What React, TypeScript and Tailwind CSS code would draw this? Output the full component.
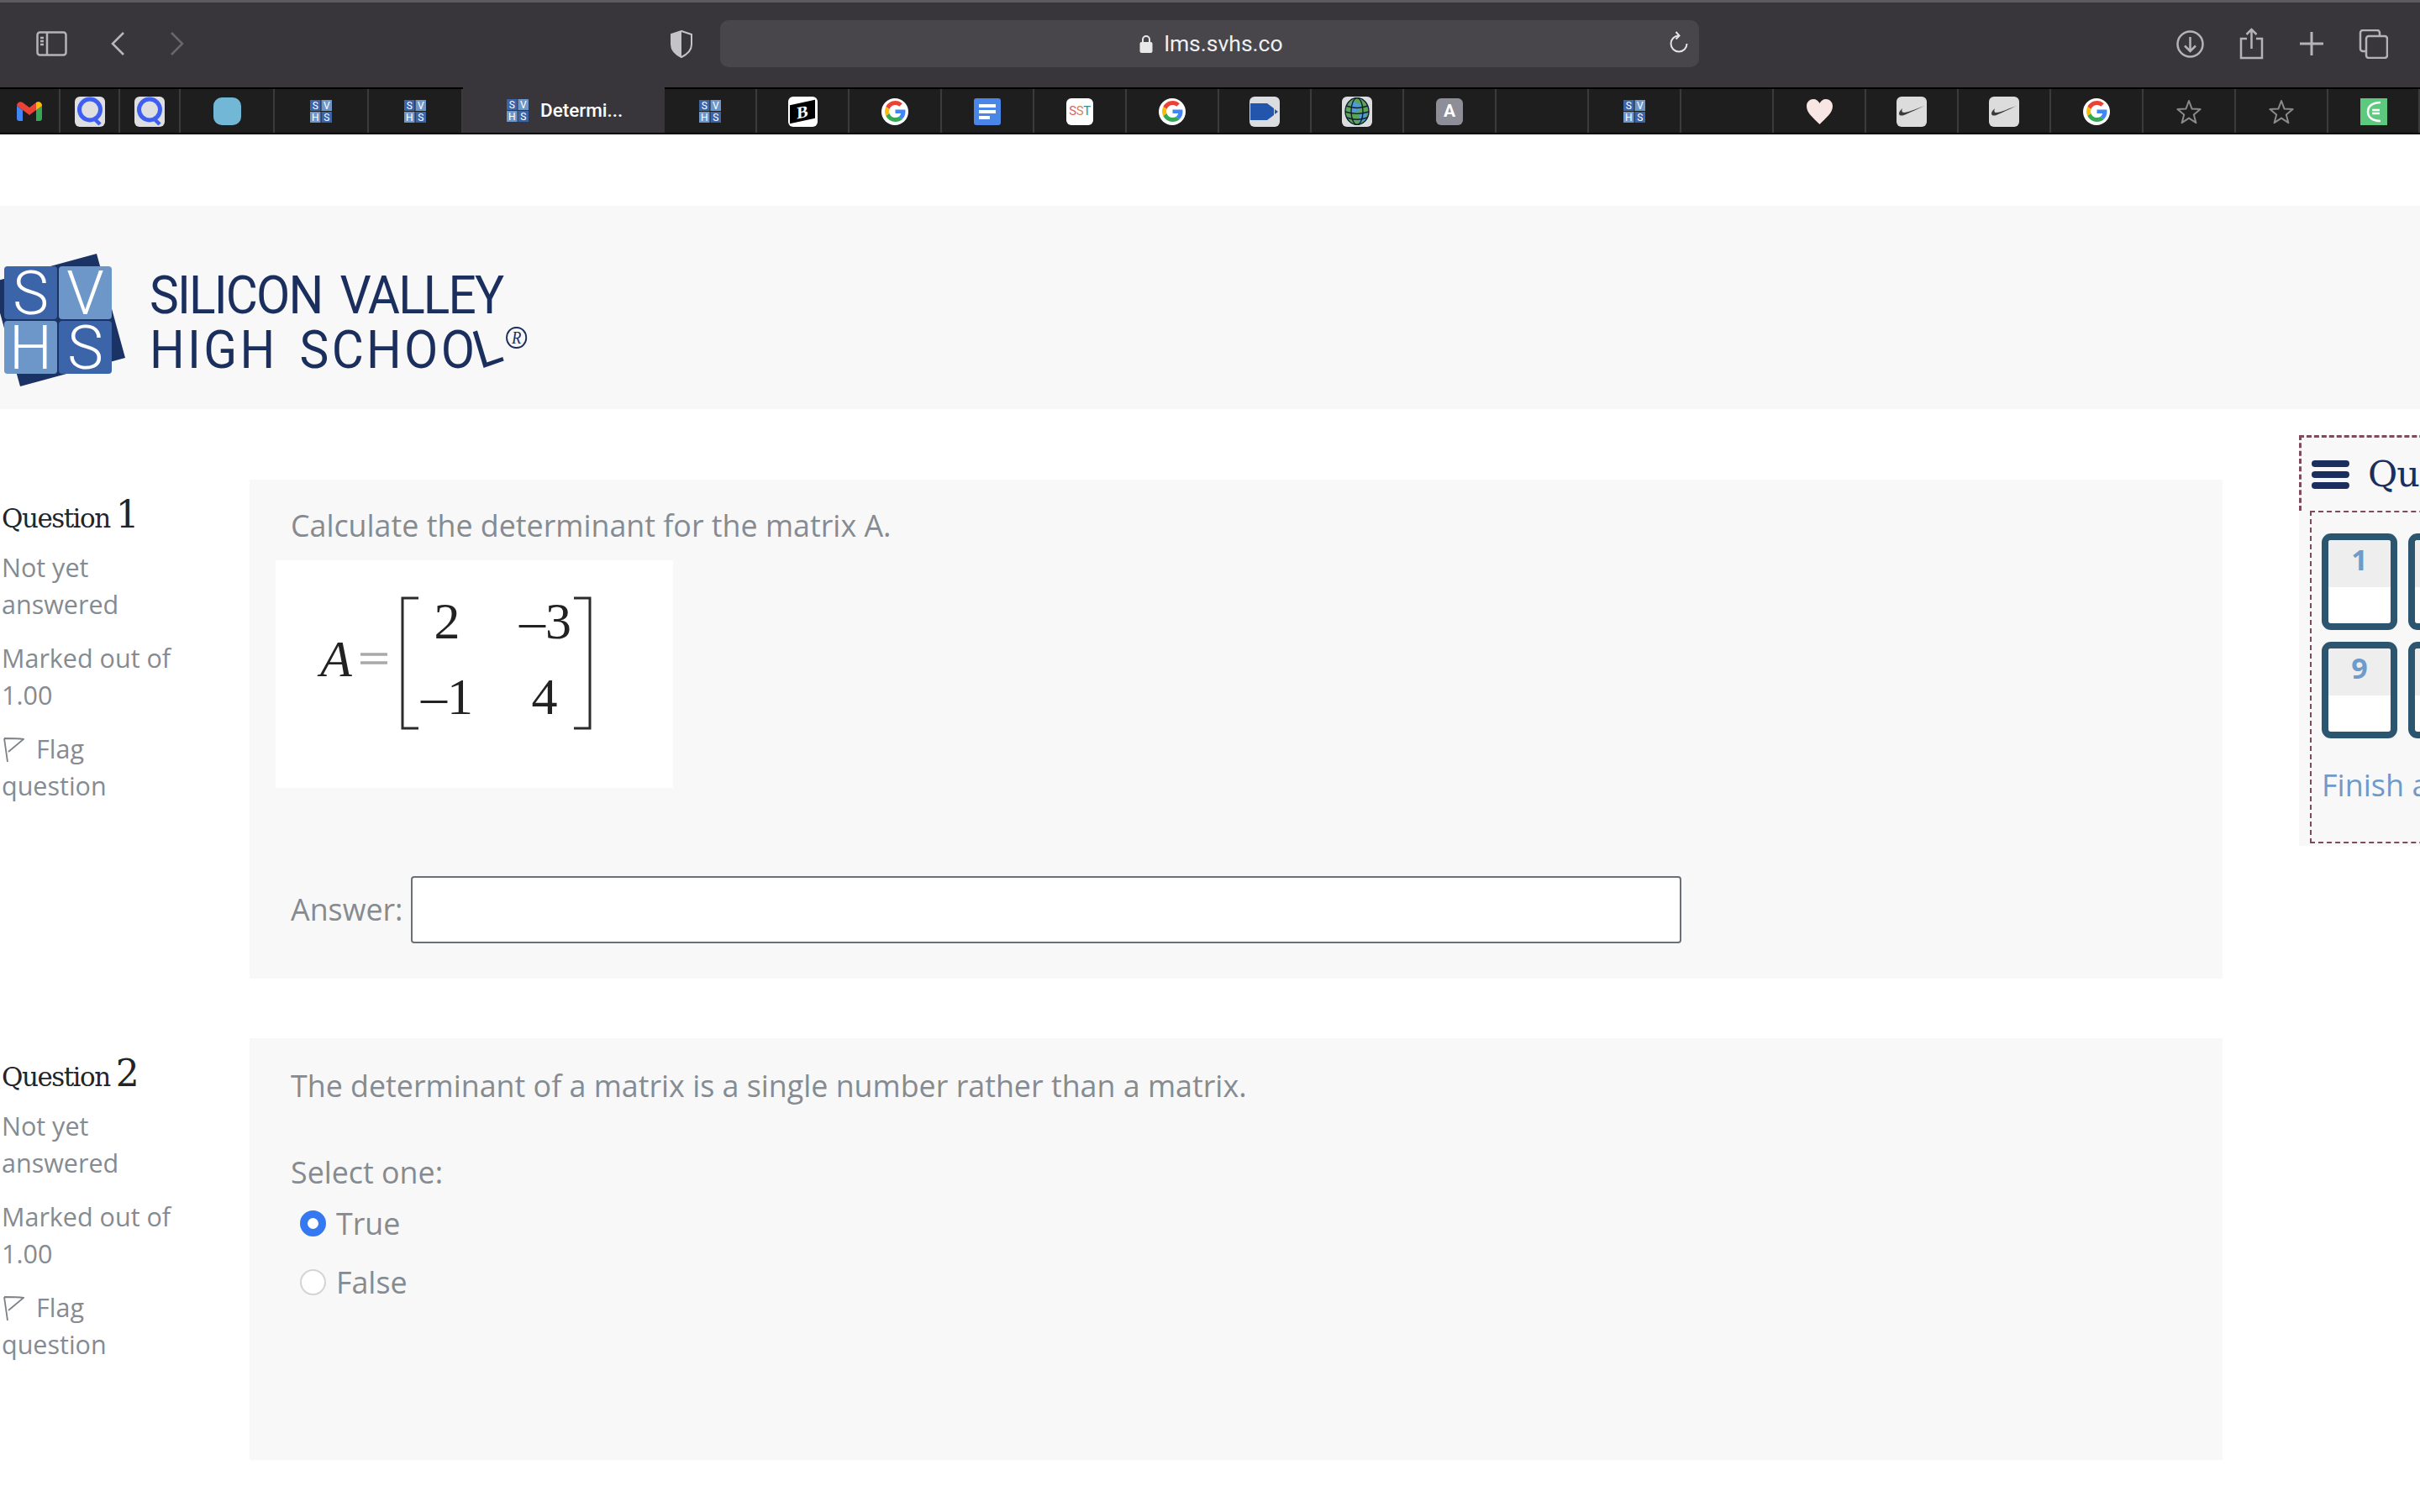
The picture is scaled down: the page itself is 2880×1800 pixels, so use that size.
import React from "react";

const GoogleG = () => (
  <div className="w-[32px] h-[32px] rounded-full bg-white flex items-center justify-center">
    <svg width="25" height="25" viewBox="0 0 48 48">
      <path fill="#EA4335" d="M24 9.5c3.54 0 6.71 1.22 9.21 3.6l6.85-6.85C35.9 2.38 30.47 0 24 0 14.62 0 6.51 5.38 2.56 13.22l7.98 6.19C12.43 13.72 17.74 9.5 24 9.5z" />
      <path fill="#4285F4" d="M46.98 24.55c0-1.57-.15-3.09-.38-4.55H24v9.02h12.94c-.58 2.96-2.26 5.48-4.78 7.18l7.73 6c4.51-4.18 7.09-10.36 7.09-17.65z" />
      <path fill="#FBBC05" d="M10.53 28.59c-.48-1.45-.76-2.99-.76-4.59s.27-3.14.76-4.59l-7.98-6.19C.92 16.46 0 20.12 0 24c0 3.88.92 7.54 2.56 10.78l7.97-6.19z" />
      <path fill="#34A853" d="M24 48c6.48 0 11.93-2.13 16.03-5.81l-7.73-6c-2.15 1.45-4.92 2.3-8.3 2.3-6.26 0-11.57-4.22-13.47-9.91l-7.98 6.19C6.51 42.62 14.62 48 24 48z" />
    </svg>
  </div>
);

const SvhsMini = () => (
  <svg width="26" height="27" viewBox="0 0 26 27">
    <rect x="0" y="0" width="12.5" height="13" fill="#3c64a8" />
    <rect x="13.5" y="0" width="12.5" height="13" fill="#6d97c8" />
    <rect x="0" y="14" width="12.5" height="13" fill="#6d97c8" />
    <rect x="13.5" y="14" width="12.5" height="13" fill="#3c64a8" />
    <g fill="#ffffff" fontFamily="Roboto, sans-serif" fontSize="12" textAnchor="middle">
      <text x="6.2" y="11">S</text>
      <text x="19.7" y="11">V</text>
      <text x="6.2" y="25">H</text>
      <text x="19.7" y="25">S</text>
    </g>
  </svg>
);

const QIcon = () => (
  <div className="w-[36px] h-[36px] rounded-[6px] bg-[#dfdfe2] flex items-center justify-center">
    <svg width="32" height="35" viewBox="0 0 32 35" fill="none">
      <circle cx="16" cy="15.5" r="12.5" stroke="#3f5ff0" strokeWidth="5" />
      <path d="M22 27l6 6" stroke="#3f5ff0" strokeWidth="4.5" />
    </svg>
  </div>
);

const NikeIcon = () => (
  <div className="w-[36px] h-[36px] rounded-[6px] bg-[#dcdcdc] flex items-center justify-center">
    <svg width="32" height="18" viewBox="0 0 32 18">
      <path d="M31 2 C22 6 12 11 7 13 C4 14 1 14 1 11 C1 9 3 7 5 5 C4 8 4 10 7 10 C12 10 22 5 31 2z" fill="#3a3a3a" />
    </svg>
  </div>
);

const StarIcon = () => (
  <svg width="30" height="30" viewBox="0 0 30 30" fill="none" stroke="#8a8a8c" strokeWidth="2" strokeLinejoin="round">
    <path d="M15 2l3.6 9.6 10 .5-7.8 6.4 2.6 9.7L15 22.6l-8.4 5.6 2.6-9.7-7.8-6.4 10-.5z" />
  </svg>
);

type Tab = { w: string; icon?: React.ReactNode; active?: boolean };

const tabs: Tab[] = [
  {
    w: "w-[72px]",
    icon: (
      <svg width="30" height="23" viewBox="0 0 30 23">
        <path d="M0 5v15a3 3 0 0 0 3 3h4V10z" fill="#4285f4" />
        <path d="M23 10v13h4a3 3 0 0 0 3-3V5z" fill="#34a853" />
        <path d="M0 5l7 5 8 6 8-6 7-5c0-4-4-6-7-4l-8 6-8-6C4-1 0 1 0 5z" fill="#ea4335" />
        <path d="M23 1v9l7-5c0-4-4-6-7-4z" fill="#fbbc05" />
      </svg>
    ),
  },
  { w: "w-[71px]", icon: <QIcon /> },
  { w: "w-[72px]", icon: <QIcon /> },
  { w: "w-[112px]", icon: <div className="w-[33px] h-[33px] rounded-[10px] bg-[#72b8d6]" /> },
  { w: "w-[112px]", icon: <SvhsMini /> },
  { w: "w-[112px]", icon: <SvhsMini /> },
  { w: "w-[240px]", active: true },
  { w: "w-[110px]", icon: <SvhsMini /> },
  {
    w: "w-[110px]",
    icon: (
      <div className="w-[35px] h-[36px] rounded-[6px] bg-white flex items-center justify-center">
        <div className="w-[30px] h-[22px] bg-black -skew-y-12 flex items-center justify-center">
          <span className="font-['Liberation_Serif',serif] font-bold text-[20px] leading-none text-white">B</span>
        </div>
      </div>
    ),
  },
  { w: "w-[110px]", icon: <GoogleG /> },
  {
    w: "w-[110px]",
    icon: (
      <div className="w-[32px] h-[32px] rounded-[3px] bg-[#4a86e8] flex flex-col justify-center gap-[3px] pl-[6px]">
        <div className="w-[20px] h-[4px] bg-white" />
        <div className="w-[20px] h-[4px] bg-white" />
        <div className="w-[13px] h-[4px] bg-white" />
      </div>
    ),
  },
  {
    w: "w-[110px]",
    icon: (
      <div className="w-[32px] h-[32px] rounded-[6px] bg-white flex items-center justify-center font-['Roboto',sans-serif] text-[15px] tracking-[-0.5px] leading-none">
        <span className="text-[#d9645f]">S</span>
        <span className="text-[#c98a5a]">S</span>
        <span className="text-[#3f8a8a]">T</span>
      </div>
    ),
  },
  { w: "w-[110px]", icon: <GoogleG /> },
  {
    w: "w-[110px]",
    icon: (
      <div className="w-[36px] h-[36px] rounded-[6px] bg-[#dcdde0] flex items-center pl-[1px]">
        <svg width="34" height="20" viewBox="0 0 34 20">
          <path d="M0 0h20l8 6v8l-8 6H0z" fill="#2255ab" />
          <path d="M29 7l4 3-4 3z" fill="#2255ab" />
        </svg>
      </div>
    ),
  },
  {
    w: "w-[110px]",
    icon: (
      <div className="w-[36px] h-[36px] rounded-[6px] bg-[#dcdde0] flex items-center justify-center">
        <svg width="30" height="33" viewBox="0 0 30 33" fill="none">
          <ellipse cx="15" cy="16.5" rx="14" ry="16" fill="#5ea35a" />
          <path d="M8 5l12 3-2 8-10 2zM18 20l9-3-2 10-8 3z" fill="#4f9bd6" />
          <g stroke="#10202e" strokeWidth="1.4">
            <ellipse cx="15" cy="16.5" rx="14" ry="16" />
            <ellipse cx="15" cy="16.5" rx="7" ry="16" />
            <path d="M2 10c8 3 18 3 26 0M1 17c9 3 19 3 28 0M3 24c8 3 16 3 24 0" />
          </g>
        </svg>
      </div>
    ),
  },
  {
    w: "w-[110px]",
    icon: (
      <div className="w-[32px] h-[32px] rounded-[6px] bg-[#8e8e98] flex items-center justify-center font-['Roboto',sans-serif] font-bold text-[21px] leading-none text-white">
        A
      </div>
    ),
  },
  { w: "w-[110px]" },
  { w: "w-[110px]", icon: <SvhsMini /> },
  { w: "w-[110px]" },
  {
    w: "w-[110px]",
    icon: (
      <svg width="31" height="30" viewBox="0 0 31 30">
        <path d="M15.5 30C9 23 0 17 0 8.500C0 3 4 0 8 0c3.500 0 6 2 7.500 5C17 2 19.500 0 23 0c4 0 8 3 8 8.500C31 17 22 23 15.500 30z" fill="#f8e6e3" />
      </svg>
    ),
  },
  { w: "w-[110px]", icon: <NikeIcon /> },
  { w: "w-[110px]", icon: <NikeIcon /> },
  { w: "w-[110px]", icon: <GoogleG /> },
  { w: "w-[110px]", icon: <StarIcon /> },
  { w: "w-[110px]", icon: <StarIcon /> },
  {
    w: "w-[109px]",
    icon: (
      <div className="w-[32px] h-[32px] bg-[#5dc97e] flex items-center justify-center">
        <svg width="20" height="26" viewBox="0 0 20 26" fill="none" stroke="#ffffff" strokeWidth="2.5">
          <path d="M18 2C9 2 3 6 3 13s6 11 15 11" />
          <path d="M8 11h9M8 15h9" />
        </svg>
      </div>
    ),
  },
];

function Toolbar() {
  return (
    <div className="h-[104px] bg-[#38363a] border-t-[3px] border-[#5c5b5e] pb-[3px] flex items-center relative">
      <svg className="ml-[43px]" width="37" height="30" viewBox="0 0 37 30" fill="none" stroke="#b4b4b6" strokeWidth="2.5">
        <rect x="1.500" y="1.500" width="34" height="27" rx="3" />
        <path d="M13 1.500v27M5 8h4M5 12h4M5 16h4" />
      </svg>
      <svg className="ml-[52px]" width="16" height="28" viewBox="0 0 16 28" fill="none" stroke="#b8b8ba" strokeWidth="2.5">
        <path d="M15 1L2 14l13 13" />
      </svg>
      <svg className="ml-[55px]" width="16" height="28" viewBox="0 0 16 28" fill="none" stroke="#68676a" strokeWidth="2.5">
        <path d="M1 1l13 13L1 27" />
      </svg>
      <svg className="ml-[579px]" width="26" height="33" viewBox="0 0 26 33">
        <path d="M13 1l12 4v12c0 7-6 12-12 15C7 29 1 24 1 17V5z" fill="none" stroke="#c4c4c6" strokeWidth="2" />
        <path d="M13 1L1 5v12c0 7 6 12 12 15z" fill="#c4c4c6" />
      </svg>
      <div className="ml-[33px] w-[1165px] h-[56px] rounded-[10px] bg-[#48464a] flex items-center relative">
        <div className="mx-auto flex items-center gap-[13px] pl-[4px]">
          <svg width="16" height="22" viewBox="0 0 16 22">
            <path d="M4 10V6a4 4 0 0 1 8 0v4" fill="none" stroke="#e8e8e8" strokeWidth="2" />
            <rect x="0.500" y="9" width="15" height="13" rx="2" fill="#e8e8e8" />
          </svg>
          <span className="font-['Roboto',sans-serif] text-[26.5px] leading-none text-[#f0f0f0]">lms.svhs.co</span>
        </div>
        <svg className="absolute right-[13px] top-[13px]" width="22" height="27" viewBox="0 0 22 27" fill="none" stroke="#e4e4e4" strokeWidth="2">
          <path d="M11 5.500A9.500 9.500 0 1 0 20.500 15" />
          <path d="M7.500 1l4 4.500-4 4" />
        </svg>
      </div>
      <svg className="ml-[568px]" width="33" height="33" viewBox="0 0 33 33" fill="none" stroke="#b4b4b6" strokeWidth="2.500">
        <circle cx="16.500" cy="16.500" r="15" />
        <path d="M16.500 8v17M10 18.500l6.500 6.500 6.500-6.500" />
      </svg>
      <svg className="ml-[42px]" width="29" height="38" viewBox="0 0 29 38" fill="none" stroke="#b4b4b6" strokeWidth="2.500">
        <path d="M9 13H2v23h25V13h-7M14.500 25V2M8.500 8l6-6 6 6" />
      </svg>
      <svg className="ml-[43px]" width="28" height="28" viewBox="0 0 28 28" fill="none" stroke="#b4b4b6" strokeWidth="3">
        <path d="M14 0v28M0 14h28" />
      </svg>
      <svg className="ml-[42px]" width="35" height="35" viewBox="0 0 35 35" fill="none" stroke="#b4b4b6" strokeWidth="2.500">
        <path d="M8 26H5a3 3 0 0 1-3-3V4a3 3 0 0 1 3-3h17a3 3 0 0 1 3 3v3" />
        <rect x="9" y="8" width="25" height="26" rx="3" />
      </svg>
    </div>
  );
}

function TabBar() {
  return (
    <div className="h-[56px] bg-[#1e1e1f] flex border-y-2 border-black">
      {tabs.map((t, i) =>
        t.active ? (
          <div key={i} className={`${t.w} shrink-0 bg-[#38363a] -mt-[2px] flex items-center pl-[52px] gap-[14px]`}>
            <SvhsMini />
            <span className="font-['Roboto',sans-serif] font-medium text-[22.5px] leading-none text-white">Determi...</span>
          </div>
        ) : (
          <div key={i} className={`${t.w} shrink-0 flex items-center justify-center border-r-2 border-[#3b3b3c] pt-[1px]`}>
            {t.icon}
          </div>
        )
      )}
    </div>
  );
}

function SiteHeader() {
  return (
    <div className="mt-[85px] h-[242px] bg-[#f8f8f8] flex items-center pl-[5px] pt-[36px] gap-[28px]">
      <svg className="-mt-[4px] -ml-[5px]" width="150" height="160" viewBox="0 0 150 160">
        <path d="M115 0l34 124-125 34L-10 34z" fill="#1b3264" />
        <rect x="5" y="15" width="63" height="63" rx="4" fill="#3c64a8" />
        <rect x="70" y="15" width="63" height="63" rx="4" fill="#6d97c8" />
        <rect x="5" y="80" width="63" height="63" rx="4" fill="#6d97c8" />
        <rect x="70" y="80" width="63" height="63" rx="4" fill="#3c64a8" />
        <g fill="#ffffff" fontFamily="Roboto, sans-serif" fontSize="72" fontWeight="300" textAnchor="middle">
          <text x="36.500" y="72">S</text>
          <text x="101.500" y="72">V</text>
          <text x="36.500" y="137">H</text>
          <text x="101.500" y="137">S</text>
        </g>
      </svg>
      <div className="font-['Roboto',sans-serif] text-[63px] leading-[65px] text-[#1b2f5e] tracking-[-2px] scale-x-[0.93] origin-left [word-spacing:9px]">
        <div>SILICON VALLEY</div>
        <div className="flex items-start tracking-[3.5px]">
          <span>HIGH SCHOO</span>
          <span className="inline-block -rotate-[18deg] origin-bottom-left ml-[6px] mt-[1px]">L</span>
          <span className="-ml-[7px] mt-[5px] w-[27px] h-[26px] rounded-full border-2 border-[#1b2f5e] flex items-center justify-center font-['Liberation_Serif',serif] text-[20px] leading-none tracking-normal italic">
            R
          </span>
        </div>
      </div>
    </div>
  );
}

function Meta({ n }: { n: number }) {
  return (
    <div className="w-[297px] shrink-0 pl-[2px] font-['Open_Sans',sans-serif] text-[30.5px] leading-[44px] text-[#858b90]">
      <div className="font-['DejaVu_Serif',serif] text-[#212529] h-[44px] flex items-baseline gap-[7px] mt-[20px] tracking-[-1.5px]">
        <span className="text-[31px]">Question</span>
        <span className="text-[44px] leading-none">{n}</span>
      </div>
      <div className="mt-[18px] w-[220px]">Not yet answered</div>
      <div className="mt-[20px] w-[220px]">Marked out of 1.00</div>
      <div className="mt-[20px] w-[220px]">
        <svg className="inline-block mr-[14px] -mt-[4px]" width="27" height="30" viewBox="0 0 27 30" fill="none" stroke="#7d8388" strokeWidth="1.800">
          <path d="M3 1l4 28M3 1c8 0 16 0 23 1l-18 15" />
        </svg>
        Flag question
      </div>
    </div>
  );
}

function Matrix() {
  return (
    <div className="w-[473px] h-[271px] bg-white -ml-[18px] mt-[18px]">
      <svg width="473" height="271" viewBox="0 0 473 271">
        <g fontFamily="'Liberation Serif', serif" fontSize="62" fill="#222222" textAnchor="middle">
          <text x="72" y="138" fontStyle="italic">A</text>
          <text x="204" y="93">2</text>
          <text x="321" y="93">&#8211;3</text>
          <text x="204" y="183">&#8211;1</text>
          <text x="320" y="183">4</text>
        </g>
        <path d="M101 112h32M101 122h32" stroke="#a9a9a9" strokeWidth="3.500" />
        <path d="M170 45h-19v155h19M355 45h19v155h-19" fill="none" stroke="#2b2b2b" strokeWidth="3" />
      </svg>
    </div>
  );
}

function Q1() {
  return (
    <div className="flex mb-[71px]">
      <Meta n={1} />
      <div className="w-[2348px] h-[594px] bg-[#f8f8f8] pl-[49px] pt-[30px] font-['Open_Sans',sans-serif] text-[35.8px] leading-[48px] text-[#858b90]">
        <div>Calculate the determinant for the matrix A.</div>
        <Matrix />
        <div className="mt-[105px] flex items-center gap-[9px]">
          <span className="pb-[2px]">Answer:</span>
          <div className="w-[1512px] h-[80px] bg-white border-2 border-[#6a7075] rounded-[4px]" />
        </div>
      </div>
    </div>
  );
}

function Q2() {
  return (
    <div className="flex">
      <Meta n={2} />
      <div className="w-[2348px] h-[502px] bg-[#f8f8f8] pl-[49px] pt-[32px] font-['Open_Sans',sans-serif] text-[35.8px] leading-[48px] text-[#858b90]">
        <div>The determinant of a matrix is a single number rather than a matrix.</div>
        <div className="mt-[55px]">Select one:</div>
        <div className="mt-[13px] ml-[11px] flex items-center gap-[12px] h-[48px]">
          <div className="w-[31px] h-[31px] rounded-full bg-white border-[9px] border-[#3478f2]" />
          <span>True</span>
        </div>
        <div className="mt-[22px] ml-[11px] flex items-center gap-[12px] h-[48px]">
          <div className="w-[31px] h-[31px] rounded-full bg-white border-2 border-[#d4d4d4]" />
          <span>False</span>
        </div>
      </div>
    </div>
  );
}

function NavBtn({ n }: { n: number }) {
  return (
    <div className="w-[90px] h-[115px] border-[8px] border-[#2c5570] rounded-[11px] bg-white overflow-hidden">
      <div className="h-[56px] bg-[#eeeeee] text-center font-['Open_Sans',sans-serif] font-bold text-[34px] leading-[46px] text-[#6f9ac9]">
        {n}
      </div>
    </div>
  );
}

function QuizNav() {
  return (
    <div className="w-[400px] shrink-0 bg-[#f8f8f8] h-[489px]">
      <div className="h-[90px] border-t-[3px] border-l-[3px] border-dashed border-[#7e4a5e] flex items-center pl-[12px] gap-[22px] whitespace-nowrap">
        <div className="flex flex-col gap-[5px] w-[45px] shrink-0">
          <div className="h-[8px] rounded-full bg-[#1b2f5e]" />
          <div className="h-[8px] rounded-full bg-[#1b2f5e]" />
          <div className="h-[8px] rounded-full bg-[#1b2f5e]" />
        </div>
        <span className="font-['DejaVu_Serif',serif] text-[43px] leading-none text-[#1b2f5e] tracking-[-1px]">Quiz navigation</span>
      </div>
      <div className="ml-[13px] h-[396px] border-[2px] border-dashed border-[#7e4a5e] pl-[12px] pt-[25px]">
        <div className="grid grid-cols-[90px_90px] gap-x-[13px] gap-y-[14px]">
          <NavBtn n={1} />
          <NavBtn n={2} />
          <NavBtn n={9} />
          <NavBtn n={10} />
        </div>
        <div className="mt-[32px] font-['Open_Sans',sans-serif] text-[36px] leading-[48px] text-[#6f9ac9] whitespace-nowrap">
          Finish attempt ...
        </div>
      </div>
    </div>
  );
}

export default function App() {
  return (
    <div className="w-[2880px] h-[1800px] bg-white overflow-hidden">
      <Toolbar />
      <TabBar />
      <SiteHeader />
      <div className="flex mt-[31px]">
        <div className="w-[2736px] shrink-0 pt-[53px]">
          <Q1 />
          <Q2 />
        </div>
        <QuizNav />
      </div>
    </div>
  );
}
